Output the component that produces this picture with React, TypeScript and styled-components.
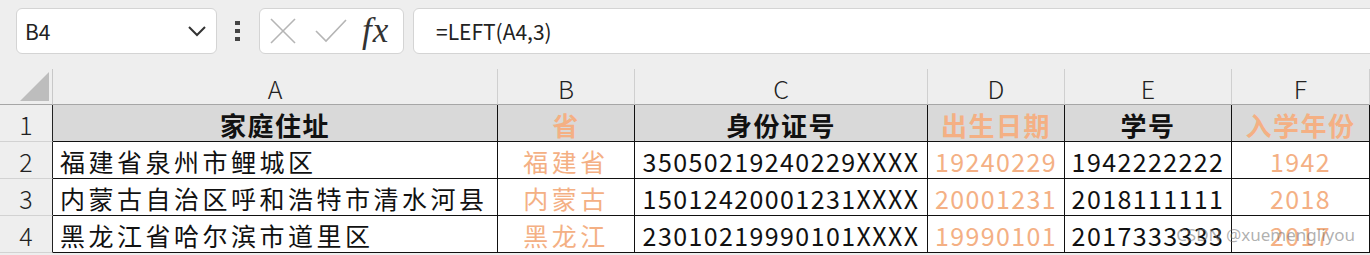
import React from 'react'
import styled, { createGlobalStyle } from 'styled-components'

const GlobalStyle = createGlobalStyle`
  html, body {
    margin: 0;
    padding: 0;
    background: #eeeeee;
    font-family: "Noto Sans CJK SC", "Noto Sans", sans-serif;
  }
`

const ORANGE = '#f4b084'

const Page = styled.div`
  position: relative;
  width: 1370px;
  height: 255px;
  overflow: hidden;
  display: flex;
  flex-direction: column;
  background: #eeeeee;
`

const Toolbar = styled.div`
  flex-shrink: 0;
  display: flex;
  align-items: center;
  height: 69px;
  padding: 0 0 7px 16px;
  box-sizing: border-box;
`

const NameBox = styled.div`
  width: 201px;
  height: 46px;
  box-sizing: border-box;
  border: 1px solid #d4d4d4;
  border-radius: 6px;
  background: #fff;
  display: flex;
  align-items: center;
  justify-content: space-between;
  padding: 0 9px 0 8px;
  font-size: 21px;
  color: #222;
`

const Dots = styled.div`
  display: flex;
  flex-direction: column;
  gap: 4px;
  margin: 0 19px 0 18px;

  span {
    width: 5px;
    height: 4px;
    background: #444;
  }
`

const ButtonGroup = styled.div`
  width: 145px;
  height: 46px;
  box-sizing: border-box;
  border: 1px solid #d4d4d4;
  border-radius: 6px;
  background: #fff;
  display: flex;
  align-items: center;
  padding-left: 10px;
  gap: 19px;
`

const Fx = styled.span`
  font-family: "Liberation Serif", serif;
  font-style: italic;
  font-size: 35px;
  line-height: 1;
  color: #333;
  margin-left: -4px;
  margin-top: -2px;
  letter-spacing: 1px;
`

const FormulaBox = styled.div`
  flex: 1;
  height: 46px;
  margin-left: 9px;
  margin-right: -10px;
  box-sizing: border-box;
  border: 1px solid #d4d4d4;
  border-radius: 6px;
  background: #fff;
  display: flex;
  align-items: center;
  padding-left: 22px;
  font-size: 21px;
  color: #222;
`

const Grid = styled.div`
  flex-shrink: 0;
  display: grid;
  grid-template-columns: 53px 445px 137px 293px 137px 167px 1fr;
  grid-template-rows: 36px repeat(4, 37px);
`

const Corner = styled.div`
  background: #eeeeee;
  border-right: 1px solid #c8c8c8;
  border-bottom: 1px solid #a6a6a6;
  display: flex;
  align-items: flex-end;
  justify-content: flex-end;
  padding: 0 3px 3px 0;
`

const ColHead = styled.div`
  background: #eeeeee;
  border-right: 1px solid #cfcfcf;
  border-bottom: 1px solid #a6a6a6;
  display: flex;
  align-items: center;
  justify-content: center;
  font-size: 25px;
  font-weight: 300;
  color: #222;
  padding-top: 2px;
`

const RowHead = styled.div`
  background: #eeeeee;
  border-right: 1px solid #222;
  border-bottom: 1px solid #d2d2d2;
  display: flex;
  align-items: center;
  justify-content: center;
  font-size: 25px;
  font-weight: 300;
  color: #222;
  padding-top: 2px;
`

const Cell = styled.div<{ $head?: boolean; $orange?: boolean; $left?: boolean; $spacing?: number }>`
  background: ${p => (p.$head ? '#d9d9d9' : '#fff')};
  border-right: 1px solid #111;
  border-bottom: 1px solid #111;
  display: flex;
  align-items: center;
  justify-content: ${p => (p.$left ? 'flex-start' : 'center')};
  padding: 3px 0 0 ${p => (p.$left ? '7px' : '0')};
  box-sizing: border-box;
  overflow: hidden;
  white-space: nowrap;
  font-size: ${p => (p.$head ? '26px' : '25px')};
  font-weight: ${p => (p.$head ? 700 : 400)};
  letter-spacing: ${p => p.$spacing ?? 0}px;
  color: ${p => (p.$orange ? ORANGE : '#111')};
  line-height: 1;
`

const Watermark = styled.div`
  position: absolute;
  right: 15px;
  bottom: 9px;
  font-family: "Noto Sans", "Liberation Sans", sans-serif;
  font-size: 17px;
  color: rgba(110, 110, 110, 0.55);
`

const columns = ['A', 'B', 'C', 'D', 'E', 'F']
const orangeCols = [false, true, false, true, false, true]

const rows: string[][] = [
  ['家庭住址', '省', '身份证号', '出生日期', '学号', '入学年份'],
  ['福建省泉州市鲤城区', '福建省', '35050219240229XXXX', '19240229', '1942222222', '1942'],
  ['内蒙古自治区呼和浩特市清水河县', '内蒙古', '15012420001231XXXX', '20001231', '2018111111', '2018'],
  ['黑龙江省哈尔滨市道里区', '黑龙江', '23010219990101XXXX', '19990101', '2017333333', '2017'],
]

const isCjk = (s: string) => /[\u4e00-\u9fff]/.test(s)

export default function App() {
  return (
    <Page>
      <GlobalStyle />
      <Toolbar>
        <NameBox>
          <span>B4</span>
          <svg width="20" height="12" viewBox="0 0 20 12">
            <polyline points="2,2 10,10 18,2" fill="none" stroke="#333" strokeWidth="2" />
          </svg>
        </NameBox>
        <Dots>
          <span />
          <span />
          <span />
        </Dots>
        <ButtonGroup>
          <svg width="26" height="26" viewBox="0 0 26 26">
            <line x1="1" y1="1" x2="25" y2="25" stroke="#b5b5b5" strokeWidth="1.6" />
            <line x1="25" y1="1" x2="1" y2="25" stroke="#b5b5b5" strokeWidth="1.6" />
          </svg>
          <svg width="32" height="24" viewBox="0 0 32 24">
            <polyline points="1,12 11,22 31,1" fill="none" stroke="#b5b5b5" strokeWidth="1.6" />
          </svg>
          <Fx>fx</Fx>
        </ButtonGroup>
        <FormulaBox>=LEFT(A4,3)</FormulaBox>
      </Toolbar>
      <Grid>
        <Corner>
          <svg width="29" height="29" viewBox="0 0 29 29">
            <polygon points="0,29 29,29 29,0" fill="#bdbdbd" />
          </svg>
        </Corner>
        {columns.map(c => (
          <ColHead key={c}>{c}</ColHead>
        ))}
        {rows.map((row, r) => (
          <React.Fragment key={r}>
            <RowHead>{r + 1}</RowHead>
            {row.map((v, c) => (
              <Cell
                key={c}
                $head={r === 0}
                $orange={orangeCols[c]}
                $left={c === 0 && r > 0}
                $spacing={r === 0 ? 1.5 : isCjk(v) ? 3.5 : 1.4}
              >
                {v}
              </Cell>
            ))}
          </React.Fragment>
        ))}
      </Grid>
      <Watermark>CSDN @xuemengliyou</Watermark>
    </Page>
  )
}
